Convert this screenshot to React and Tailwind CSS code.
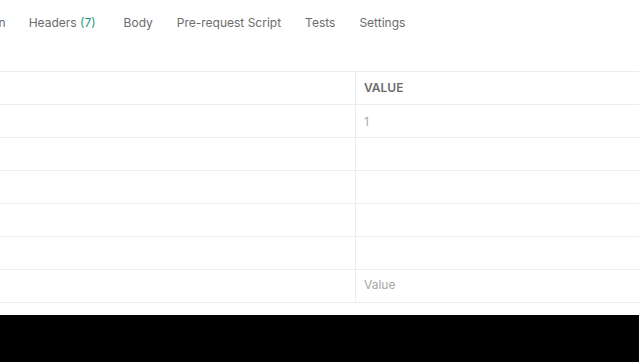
import React from 'react';

const rows = [
  { key: '', value: '1' },
  { key: '', value: '' },
  { key: '', value: '' },
  { key: '', value: '' },
  { key: '', value: '' },
];

const App = () => {
  return (
    <div className="h-screen bg-black font-['Inter',sans-serif]">
      <div className="h-[315px] bg-white overflow-hidden">
        {/* Tabs */}
        <div className="flex items-center h-[45px] text-[12px] text-[#6b6b6b] whitespace-nowrap -ml-[70px]">
          <span className="mr-[23px]">Authorization</span>
          <span className="mr-[28px]">
            Headers <span className="text-[#1a9c7c]">(7)</span>
          </span>
          <span className="mr-[24px]">Body</span>
          <span className="mr-[24px]">Pre-request Script</span>
          <span className="mr-[24px]">Tests</span>
          <span>Settings</span>
        </div>

        {/* Table */}
        <div className="mt-[26px] border-t border-[#ededed]">
          <div className="flex h-[33px] border-b border-[#ededed]">
            <div className="w-[356px] border-r border-[#ededed]" />
            <div className="flex-1 flex items-center px-[8px] text-[12px] font-semibold text-[#6b6b6b]">
              VALUE
            </div>
          </div>
          {rows.map((row, i) => (
            <div key={i} className="flex h-[33px] border-b border-[#ededed]">
              <div className="w-[356px] border-r border-[#ededed]" />
              <div className="flex-1 flex items-center px-[8px] pt-[1px] text-[12px] text-[#a6adb4]">
                {row.value}
              </div>
            </div>
          ))}
          <div className="flex h-[33px] border-b border-[#ededed]">
            <div className="w-[356px] border-r border-[#ededed]" />
            <div className="flex-1 flex items-center px-[8px] pb-[2px] text-[12px] text-[#a6a6a6]">
              Value
            </div>
          </div>
        </div>
      </div>
    </div>
  );
};

export default App;
